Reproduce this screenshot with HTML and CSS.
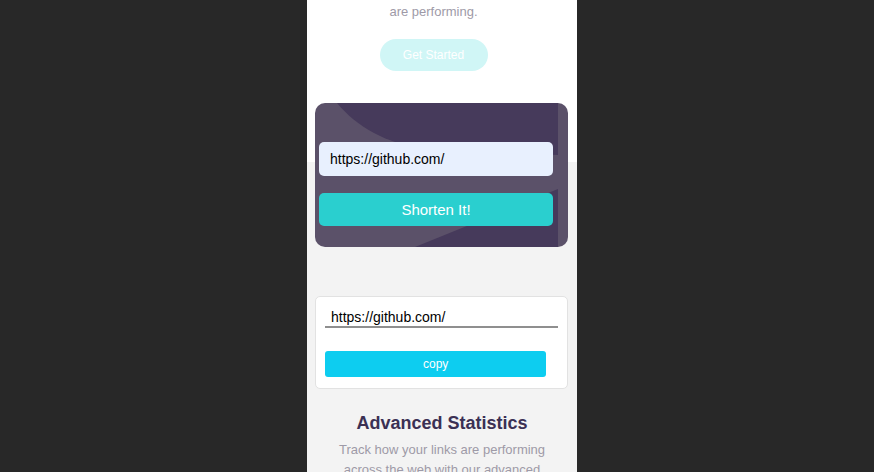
FILE: index.html
```html
<!DOCTYPE html>
<html lang="en">
<head>
<meta charset="utf-8">
<title>Shortly</title>
<link rel="stylesheet" href="styles.css">
</head>
<body>
<main class="page">
  <div class="top">
    <section class="hero">
      <p class="hero-text">are performing.</p>
      <a class="btn-start" href="#">Get Started</a>
    </section>
    <form class="shorten-card">
      <svg class="shorten-bg" viewBox="0 0 253 144" preserveAspectRatio="none" aria-hidden="true">
        <rect width="253" height="144" fill="#5b5169"/>
        <path d="M22 0 L243 0 L243 52 L110 46 C70 40 42 24 22 0 Z" fill="#463a5b"/>
        <path d="M100 144 L243 86 L243 144 Z" fill="#463a5b"/>
      </svg>
      <input class="url-input" type="text" value="https://github.com/">
      <button class="btn-shorten" type="button">Shorten It!</button>
    </form>
  </div>
  <section class="results">
    <div class="result-card">
      <input class="result-input" type="text" value="https://github.com/">
      <button class="btn-copy" type="button">copy</button>
    </div>
  </section>
  <section class="stats">
    <h2 class="stats-title">Advanced Statistics</h2>
    <p class="stats-text">Track how your links are performing across the web with our advanced statistics dashboard.</p>
  </section>
</main>
</body>
</html>
```
FILE: styles.css
```css
* { box-sizing: border-box; }

html, body { margin: 0; }

body {
  background: #282828;
  display: flex;
  justify-content: center;
  padding-left: 10px;
  font-family: "Liberation Sans", Arial, sans-serif;
  min-height: 100vh;
}

.page {
  width: 270px;
  background: #f3f3f3;
  min-height: 100vh;
  overflow: hidden;
}

.top {
  display: flow-root;
  background: #ffffff;
}

.hero {
  padding: 2px 17px 0 0;
  text-align: center;
}

.hero-text {
  margin: 0;
  font-size: 13px;
  line-height: 20px;
  color: #9e9aa7;
}

.btn-start {
  display: block;
  width: 108px;
  height: 32px;
  margin: 17px auto 0;
  border-radius: 16px;
  background: #d0f6f6;
  color: #ffffff;
  font-size: 12px;
  line-height: 32px;
  text-decoration: none;
}

.shorten-card {
  position: relative;
  width: 253px;
  height: 144px;
  margin: 32px 0 -85px 8px;
  padding: 39px 15px 21px 4px;
  border-radius: 10px;
  overflow: hidden;
  display: flex;
  flex-direction: column;
  gap: 17px;
}

.shorten-bg {
  position: absolute;
  left: 0;
  top: 0;
  width: 100%;
  height: 100%;
}

.url-input {
  position: relative;
  height: 34px;
  width: 100%;
  border: none;
  border-radius: 5px;
  background: #e8f0fe;
  padding: 0 11px;
  font-family: "Liberation Sans", Arial, sans-serif;
  font-size: 14px;
  color: #000000;
  outline: none;
}

.btn-shorten {
  position: relative;
  height: 33px;
  width: 100%;
  border: none;
  border-radius: 5px;
  background: #2acfcf;
  color: #ffffff;
  font-family: "Liberation Sans", Arial, sans-serif;
  font-size: 15px;
}

.results {
  padding: 134px 9px 0 8px;
}

.result-card {
  background: #ffffff;
  border: 1px solid #e2e2e2;
  border-radius: 5px;
  padding: 11px 9px;
  display: flex;
  flex-direction: column;
  gap: 23px;
}

.result-input {
  width: 100%;
  height: 20px;
  border: none;
  border-bottom: 2px solid #8f8f8f;
  padding: 0 6px;
  background: transparent;
  font-family: "Liberation Sans", Arial, sans-serif;
  font-size: 14px;
  color: #000000;
  outline: none;
}

.btn-copy {
  width: 95%;
  height: 26px;
  border: none;
  border-radius: 3px;
  background: #0dcdf0;
  color: #ffffff;
  font-family: "Liberation Sans", Arial, sans-serif;
  font-size: 12px;
}

.stats {
  padding-top: 24px;
  text-align: center;
}

.stats-title {
  margin: 0;
  font-size: 18px;
  line-height: 21px;
  font-weight: bold;
  color: #3b3054;
}

.stats-text {
  margin: 6px auto 0;
  width: 230px;
  font-size: 13px;
  line-height: 20px;
  color: #9e9aa7;
}
```
